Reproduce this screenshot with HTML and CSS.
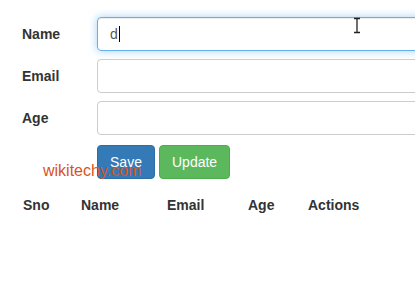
FILE: index.html
```html
<!DOCTYPE html>
<html>
<head>
<meta charset="utf-8">
<link rel="stylesheet" href="styles.css">
</head>
<body>
<div class="page">
  <form class="form">
    <div class="row">
      <label class="label">Name</label>
      <div class="input focus"><span class="val">d</span><span class="caret"></span></div>
    </div>
    <div class="row">
      <label class="label">Email</label>
      <div class="input"></div>
    </div>
    <div class="row">
      <label class="label">Age</label>
      <div class="input"></div>
    </div>
    <div class="row buttons">
      <span class="spacer"></span>
      <button type="button" class="btn save">Save</button>
      <button type="button" class="btn update">Update</button>
    </div>
  </form>
  <div class="thead">
    <span class="c1">Sno</span>
    <span class="c2">Name</span>
    <span class="c3">Email</span>
    <span class="c4">Age</span>
    <span class="c5">Actions</span>
  </div>
  <div class="watermark">wikitechy.com</div>
  <svg class="ibeam" width="8" height="17" viewBox="0 0 8 17"><path d="M1 1.5h6M1 15.5h6M4 1.5v14" stroke="#222" stroke-width="1.3" fill="none"/></svg>
</div>
</body>
</html>
```
FILE: styles.css
```css
html, body { margin: 0; padding: 0; background: #fff; }
body { font-family: "Liberation Sans", Arial, sans-serif; font-size: 14px; color: #333; overflow: hidden; }
.page { position: relative; width: 415px; height: 284px; overflow: hidden; }
.form { padding-top: 17px; display: flex; flex-direction: column; gap: 8px; }
.row { display: flex; align-items: center; }
.label { width: 75px; padding-left: 22px; box-sizing: content-box; font-weight: bold; flex-shrink: 0; }
.spacer { width: 97px; flex-shrink: 0; }
.input { box-sizing: border-box; width: 400px; height: 34px; border: 1px solid #ccc; border-radius: 4px; padding: 6px 12px; line-height: 20px; color: #555; display: flex; align-items: center; flex-shrink: 0; }
.input.focus { border-color: #66afe9; box-shadow: inset 0 1px 1px rgba(0,0,0,.075), 0 0 8px rgba(102,175,233,.6); }
.caret { display: inline-block; width: 1px; height: 16px; background: #000; margin-left: 1px; }
.buttons { margin-top: 2px; gap: 4px; }
.buttons .spacer { margin-right: -4px; }
.btn { box-sizing: border-box; height: 34px; padding: 6px 12px; font-family: inherit; font-size: 14px; line-height: 20px; color: #fff; border: 1px solid; border-radius: 4px; flex-shrink: 0; }
.save { background: #337ab7; border-color: #2e6da4; width: 58px; }
.update { background: #5cb85c; border-color: #4cae4c; width: 71px; }
.thead { display: flex; padding-left: 23px; margin-top: 16px; font-weight: bold; line-height: 20px; }
.c1 { width: 58px; }
.c2 { width: 86px; }
.c3 { width: 81px; }
.c4 { width: 60px; }
.watermark { position: absolute; left: 43px; top: 161px; font-size: 16px; color: #d9531e; line-height: 20px; }
.ibeam { position: absolute; left: 353px; top: 17px; }
```
